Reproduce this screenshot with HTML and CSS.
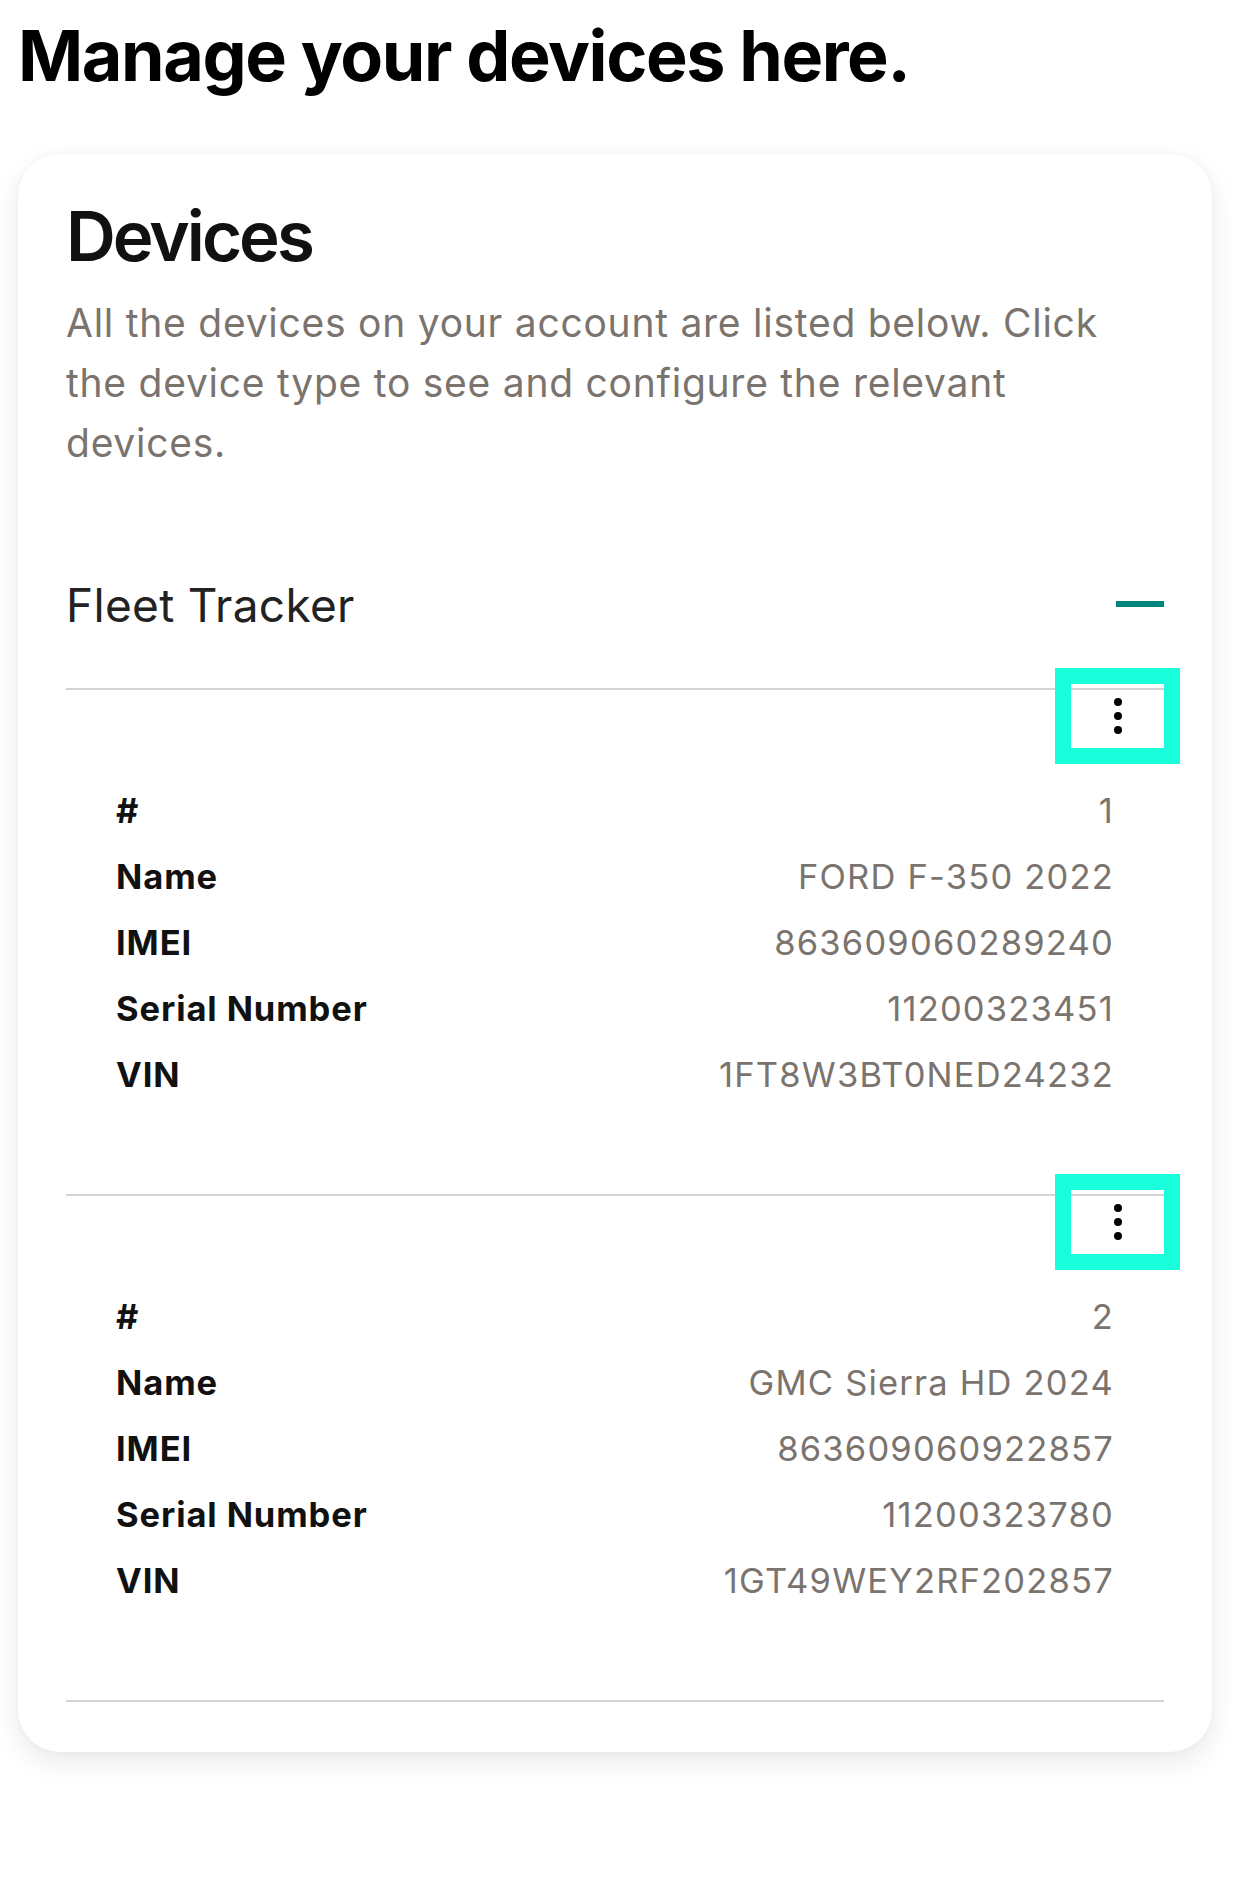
FILE: index.html
```html
<!DOCTYPE html>
<html lang="en">
<head>
<meta charset="utf-8">
<title>Devices</title>
<link rel="stylesheet" href="styles.css">
</head>
<body>
<main class="page">
  <h1 class="page-title">Manage your devices here.</h1>
  <section class="card">
    <h2 class="card-title">Devices</h2>
    <p class="card-desc">All the devices on your account are listed below. Click the device type to see and configure the relevant devices.</p>

    <div class="group-head">
      <span class="group-name">Fleet Tracker</span>
      <span class="collapse-icon" aria-label="Collapse"></span>
    </div>

    <div class="device">
      <div class="device-actions">
        <button class="kebab" aria-label="More options"><span class="dot"></span><span class="dot"></span><span class="dot"></span></button>
      </div>
      <dl class="device-rows">
        <div class="row"><dt>#</dt><dd>1</dd></div>
        <div class="row"><dt>Name</dt><dd>FORD F-350 2022</dd></div>
        <div class="row"><dt>IMEI</dt><dd>863609060289240</dd></div>
        <div class="row"><dt>Serial Number</dt><dd>11200323451</dd></div>
        <div class="row"><dt>VIN</dt><dd>1FT8W3BT0NED24232</dd></div>
      </dl>
    </div>

    <div class="device">
      <div class="device-actions">
        <button class="kebab" aria-label="More options"><span class="dot"></span><span class="dot"></span><span class="dot"></span></button>
      </div>
      <dl class="device-rows">
        <div class="row"><dt>#</dt><dd>2</dd></div>
        <div class="row"><dt>Name</dt><dd>GMC Sierra HD 2024</dd></div>
        <div class="row"><dt>IMEI</dt><dd>863609060922857</dd></div>
        <div class="row"><dt>Serial Number</dt><dd>11200323780</dd></div>
        <div class="row"><dt>VIN</dt><dd>1GT49WEY2RF202857</dd></div>
      </dl>
    </div>
    <div class="end-rule"></div>
  </section>
</main>
</body>
</html>
```

FILE: styles.css
```css
html, body {
  margin: 0;
  padding: 0;
  background: #ffffff;
}

body {
  font-family: Inter, "Noto Sans", "Liberation Sans", sans-serif;
  color: #111111;
}

.page {
  padding: 14px 18px 60px;
}

.page-title {
  margin: 0 0 56px;
  font-size: 70px;
  line-height: 84px;
  font-weight: 700;
  letter-spacing: -1.4px;
  color: #000000;
}

.card {
  width: 1194px;
  box-sizing: border-box;
  background: #ffffff;
  border-radius: 42px;
  box-shadow: 0 10px 28px rgba(0, 0, 0, 0.09), 0 0 6px rgba(0, 0, 0, 0.03);
  padding: 40px 48px 50px;
}

.card-title {
  margin: 0;
  font-size: 69px;
  line-height: 84px;
  font-weight: 600;
  letter-spacing: -3px;
  color: #111111;
}

.card-desc {
  margin: 15px 0 0;
  max-width: 1075px;
  font-size: 39px;
  line-height: 60px;
  font-weight: 400;
  color: #7a736e;
  letter-spacing: 0.75px;
}

.group-head {
  margin-top: 104px;
  height: 56px;
  display: flex;
  align-items: center;
  justify-content: space-between;
  margin-bottom: 55px;
}

.group-name {
  font-size: 46px;
  line-height: 56px;
  color: #222222;
  font-weight: 400;
  letter-spacing: 0.3px;
}

.collapse-icon {
  width: 48px;
  height: 6px;
  background: #00867e;
  margin-top: -2px;
}

.device {
  border-top: 2px solid #d4d4d4;
  padding-bottom: 86px;
}

.device-actions {
  display: flex;
  justify-content: flex-end;
  margin-top: -6px;
}

.kebab {
  width: 93px;
  height: 64px;
  padding: 0;
  border: 0;
  background: transparent;
  outline: 16px solid #1afedc;
  display: flex;
  flex-direction: column;
  align-items: center;
  justify-content: center;
  gap: 6px;
}

.dot {
  width: 8px;
  height: 8px;
  border-radius: 50%;
  background: #000000;
}

.device-rows {
  margin: 30px 0 0;
  padding: 0 50px;
}

.row {
  display: flex;
  justify-content: space-between;
  height: 66px;
  line-height: 66px;
  font-size: 34.5px;
}

.row dt {
  font-weight: 700;
  color: #111111;
  letter-spacing: 0.9px;
}

.row dd {
  margin: 0;
  font-weight: 400;
  color: #7a736e;
  letter-spacing: 1.2px;
}

.end-rule {
  height: 2px;
  background: #d4d4d4;
}
```
